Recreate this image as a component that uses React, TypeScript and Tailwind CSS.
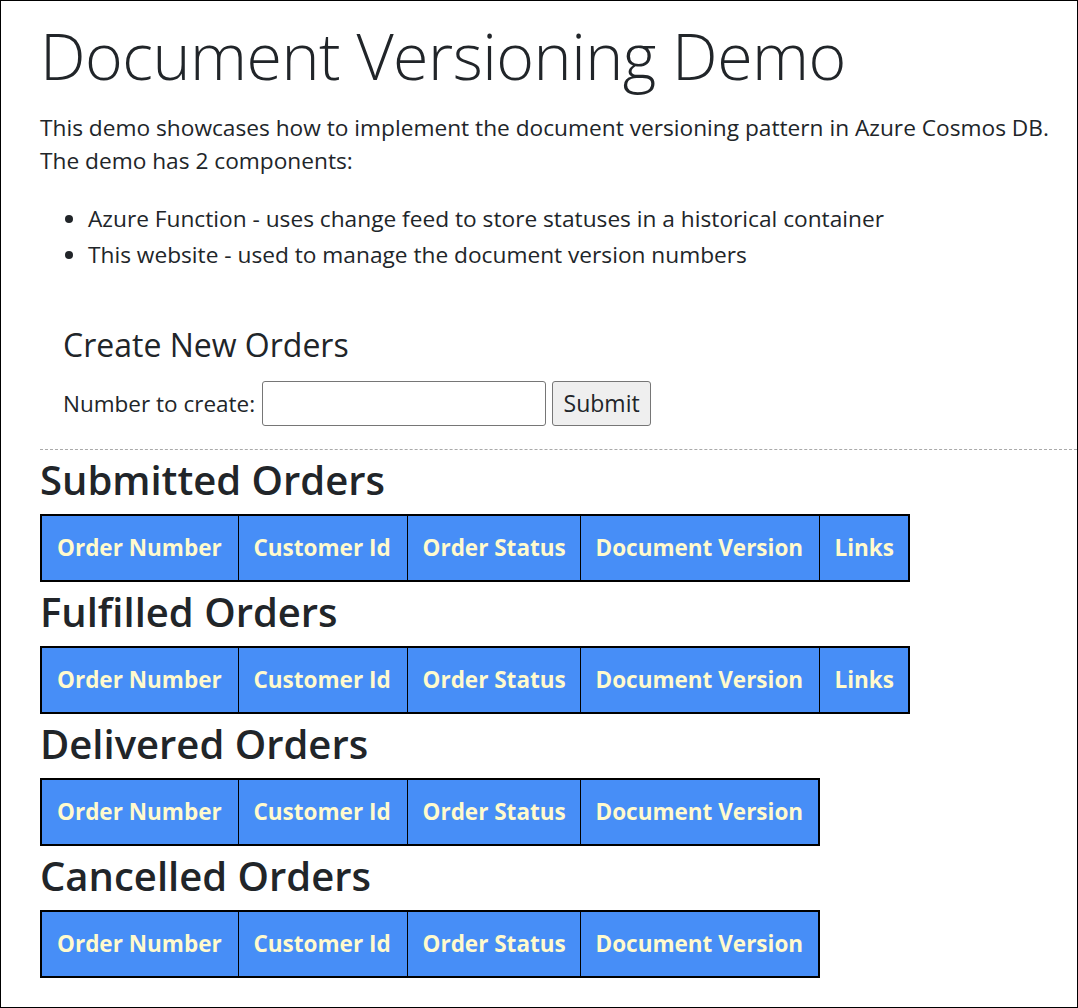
import React from 'react';

const FONT = "font-['Open_Sans','Noto_Sans',sans-serif]";

const baseCols = [
  { label: 'Order Number', w: 'w-[197px]' },
  { label: 'Customer Id', w: 'w-[169px]' },
  { label: 'Order Status', w: 'w-[173px]' },
  { label: 'Document Version', w: 'w-[239px]' },
];

function OrdersTable({ title, links }: { title: string; links?: boolean }) {
  const cols = links ? [...baseCols, { label: 'Links', w: 'w-[90px]' }] : baseCols;
  return (
    <section>
      <h2 className="mt-[6px] mb-[10px] text-[40px] leading-[48px] font-semibold text-[#212529]">{title}</h2>
      <table className={`table-fixed border-collapse border-2 border-black ${links ? 'w-[868px]' : 'w-[778px]'}`}>
        <thead>
          <tr className="h-[66px] bg-[#478ef7]">
            {cols.map((c) => (
              <th
                key={c.label}
                className={`${c.w} border border-black px-[15px] text-left text-[22.5px] font-bold text-[#fffacd] whitespace-nowrap`}
              >
                {c.label}
              </th>
            ))}
          </tr>
        </thead>
        <tbody />
      </table>
    </section>
  );
}

export default function App() {
  return (
    <div className={`${FONT} w-[1078px] h-[1008px] border border-black bg-white text-[#212529] overflow-hidden`}>
      <div className="pl-[39px]">
        <h1 className="pt-[14px] text-[64.5px] leading-[80px] font-light tracking-[-0.5px]">Document Versioning Demo</h1>
        <p className="mt-[16px] text-[22.7px] leading-[33px]">
          This demo showcases how to implement the document versioning pattern in Azure Cosmos DB.
          <br />
          The demo has 2 components:
        </p>
        <ul className="mt-[24px] list-disc pl-[48px] text-[22.7px] leading-[36px]">
          <li>Azure Function - uses change feed to store statuses in a historical container</li>
          <li>This website - used to manage the document version numbers</li>
        </ul>

        <div className="pl-[23px] pt-[54px] pb-[23px]">
          <h4 className="text-[32px] leading-[36px] mb-[18px]">Create New Orders</h4>
          <form className="flex items-center gap-[6px] text-[22.5px]" onSubmit={(e) => e.preventDefault()}>
            <label className="mr-[1px]">Number to create:</label>
            <input type="text" className="w-[284px] h-[45px] border border-[#767676] rounded-[3px] px-2" />
            <button type="submit" className="w-[99px] h-[45px] border border-[#767676] rounded-[3px] bg-[#efefef] text-[23px]">
              Submit
            </button>
          </form>
        </div>
        <div className="border-t border-dashed border-[#aaaaaa]" />

        <OrdersTable title="Submitted Orders" links />
        <OrdersTable title="Fulfilled Orders" links />
        <OrdersTable title="Delivered Orders" />
        <OrdersTable title="Cancelled Orders" />
      </div>
    </div>
  );
}
